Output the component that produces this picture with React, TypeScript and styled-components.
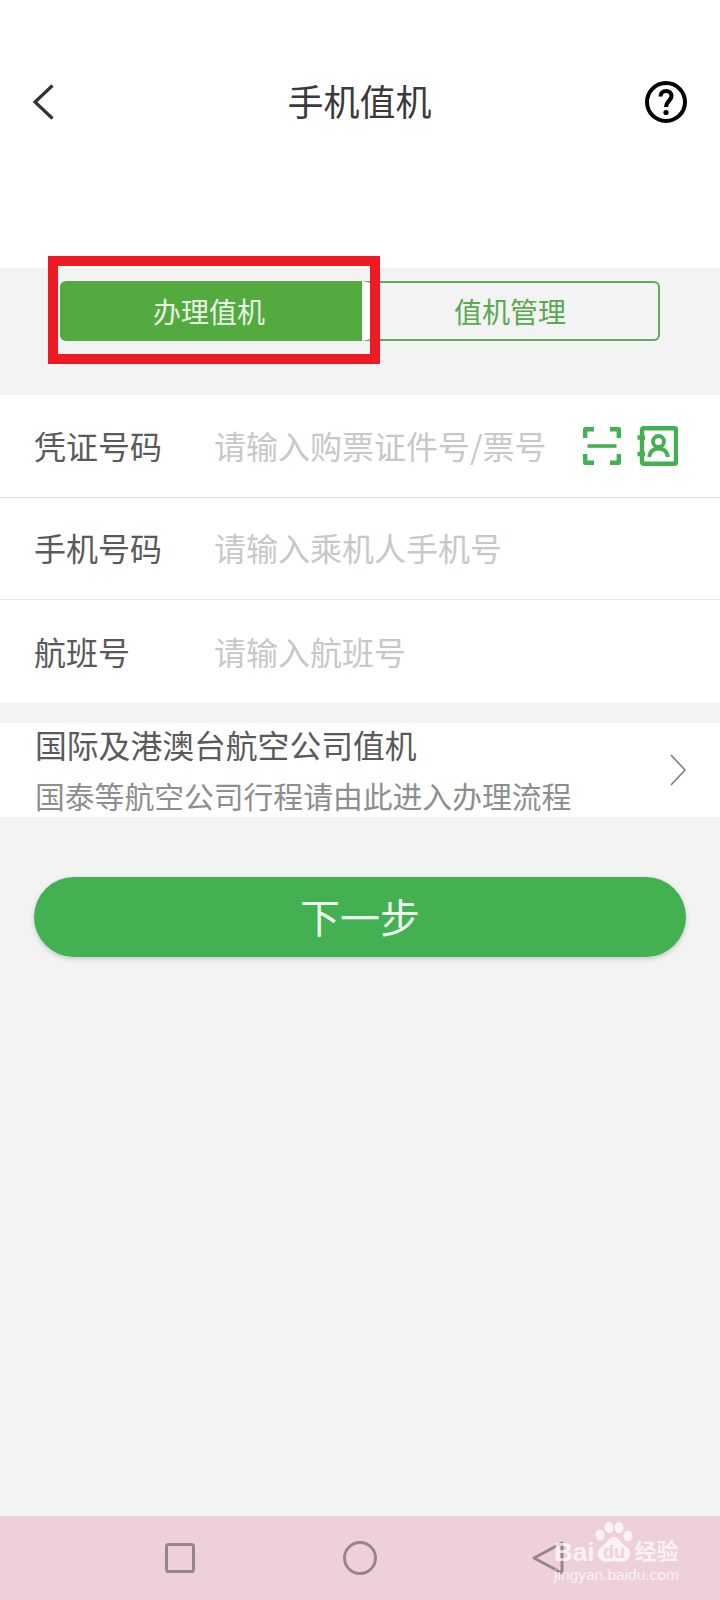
import React, { FC } from 'react';
import styled, { createGlobalStyle } from 'styled-components';

const GlobalStyle = createGlobalStyle`
  html, body {
    margin: 0;
    padding: 0;
    background: #f3f3f3;
  }
  * {
    box-sizing: border-box;
  }
`;

const GREEN = '#43b051';
const CJK = `"Noto Sans CJK SC", "Noto Sans", sans-serif`;

const Page = styled.div`
  display: flex;
  flex-direction: column;
  width: 720px;
  height: 1600px;
  overflow: hidden;
  background: #f3f3f3;
  font-family: ${CJK};
`;

const Header = styled.header`
  display: flex;
  align-items: center;
  justify-content: space-between;
  height: 268px;
  padding: 0 33px 64px 32px;
  background: #fff;
`;

const HeaderSlot = styled.div<{ $right?: boolean }>`
  display: flex;
  justify-content: ${(p) => (p.$right ? 'flex-end' : 'flex-start')};
  width: 42px;
`;

const Title = styled.h1`
  margin: 0 0 4px;
  font-size: 36px;
  line-height: 48px;
  font-weight: 400;
  color: #3a3a3a;
`;

const TabBar = styled.div`
  position: relative;
  display: flex;
  height: 127px;
  padding: 13px 60px 0 60px;
`;

const Tab = styled.div<{ $active?: boolean }>`
  display: flex;
  align-items: center;
  justify-content: center;
  height: 60px;
  font-size: 28px;
  ${(p) =>
    p.$active
      ? `
    width: 302px;
    padding-right: 4px;
    background: #53aa3e;
    color: #e9f5e4;
    border-radius: 6px 0 0 6px;
  `
      : `
    flex: 1;
    padding-right: 8px;
    color: #59a94f;
    border: 2px solid #62a95c;
    border-left: 8px solid #fff;
    border-radius: 0 6px 6px 0;
  `}
`;

const Highlight = styled.div`
  position: absolute;
  top: -12px;
  left: 48px;
  width: 332px;
  height: 108px;
  border: 10px solid #ed1c24;
`;

const Form = styled.section`
  display: grid;
  grid-auto-rows: 1fr;
  height: 308px;
  background: #fff;
`;

const Row = styled.div`
  display: flex;
  align-items: center;
  padding: 0 42px 0 34px;
  border-bottom: 1px solid #e4e4e4;
  &:last-child {
    border-bottom: none;
  }
`;

const Label = styled.span`
  width: 180px;
  margin-bottom: 2px;
  font-size: 32px;
  color: #5a5a5a;
`;

const Placeholder = styled.span`
  flex: 1;
  margin-bottom: 2px;
  font-size: 32px;
  color: #c8c8c8;
  white-space: nowrap;
`;

const IconGroup = styled.div`
  display: flex;
  align-items: center;
  gap: 16px;
`;

const IntlRow = styled.div`
  position: relative;
  display: flex;
  align-items: flex-start;
  justify-content: space-between;
  height: 94px;
  margin-top: 20px;
  padding: 3px 34px 0 35px;
  background: #fff;
`;

const IntlText = styled.div`
  display: flex;
  flex-direction: column;
  gap: 15px;
`;

const IntlTitle = styled.div`
  font-size: 31.8px;
  line-height: 36px;
  color: #5a5a5a;
`;

const IntlSub = styled.div`
  font-size: 29.8px;
  line-height: 36px;
  color: #8e8e8e;
`;

const Chevron = styled.svg`
  margin-top: 28px;
`;

const NextButton = styled.button`
  display: flex;
  align-items: center;
  justify-content: center;
  height: 80px;
  margin: 60px 34px 0;
  padding: 0 0 2px;
  border: none;
  border-radius: 40px;
  background: ${GREEN};
  box-shadow: 0 2px 5px rgba(0, 0, 0, 0.18);
  color: #eef8ef;
  font-family: ${CJK};
  font-size: 40px;
`;

const NavBar = styled.nav`
  position: relative;
  display: flex;
  align-items: center;
  height: 84px;
  margin-top: auto;
  padding: 0 0 1px 165px;
  background: #eed1d8;
`;

const NavIcon = styled.svg<{ $gap?: number }>`
  margin-left: ${(p) => p.$gap ?? 0}px;
`;

const Watermark = styled.div`
  position: absolute;
  left: 554px;
  top: 6px;
  width: 128px;
  color: rgba(255, 255, 255, 0.72);
`;

const MarkTop = styled.div`
  display: flex;
  align-items: flex-end;
  height: 41px;
`;

const MarkBai = styled.span`
  font-family: "Liberation Sans", sans-serif;
  font-weight: 700;
  font-size: 26px;
  line-height: 22px;
`;

const MarkCn = styled.span`
  font-size: 22px;
  font-weight: 700;
  line-height: 28px;
`;

const MarkUrl = styled.div`
  margin-top: 3px;
  font-family: "Liberation Sans", sans-serif;
  font-size: 15.5px;
  line-height: 18px;
  white-space: nowrap;
`;

const ScanIcon: FC = () => (
  <svg width="38" height="38" viewBox="0 0 38 38" fill="none" stroke={GREEN} strokeWidth="4.400" strokeLinejoin="round">
    <path d="M2.200 11V2.200H11" />
    <path d="M27 2.200H35.800V11" />
    <path d="M35.800 27V35.800H27" />
    <path d="M11 35.800H2.200V27" />
    <path d="M4.500 19H33.500" strokeWidth="3.600" />
  </svg>
);

const ContactIcon: FC = () => (
  <svg width="41" height="40" viewBox="0 0 41 40" fill="none" stroke={GREEN} strokeWidth="4.400">
    <rect x="5" y="2.200" width="34" height="35.600" rx="1.500" />
    <path d="M0.500 11.500H8M0.500 28H8" strokeWidth="4.600" />
    <circle cx="21.500" cy="15.500" r="5.500" strokeWidth="3.800" />
    <path d="M12 31C13 25.500 16 22.500 21.500 22.500C27 22.500 30 25.500 31 31" strokeWidth="3.800" />
  </svg>
);

const Paw: FC = () => (
  <svg width="40" height="41" viewBox="0 0 40 41" fill="rgba(255,255,255,0.72)">
    <ellipse cx="6" cy="13" rx="4.500" ry="5.500" />
    <ellipse cx="15" cy="5.500" rx="4.500" ry="5.500" />
    <ellipse cx="25" cy="5.500" rx="4.500" ry="5.500" />
    <ellipse cx="34" cy="14" rx="4.500" ry="5.500" />
    <path d="M20 15C25 15 26 20 30 23C35 26 38 30 35 36C32 41 26 40 20 39C14 40 8 41 5 36C2 31 5 26 10 23C14 20 15 15 20 15Z" />
    <text x="20" y="36" textAnchor="middle" fontFamily="Liberation Sans" fontWeight="700" fontSize="18" fill="#eed1d8">
      du
    </text>
  </svg>
);

const rows = [
  { label: '凭证号码', hint: '请输入购票证件号/票号', icons: true },
  { label: '手机号码', hint: '请输入乘机人手机号', icons: false },
  { label: '航班号', hint: '请输入航班号', icons: false },
];

const App: FC = () => (
  <Page>
    <GlobalStyle />
    <Header>
      <HeaderSlot>
        <svg width="22" height="36" viewBox="0 0 22 36" fill="none" stroke="#333" strokeWidth="3.200">
          <path d="M20.500 1.500L3 18L20.500 34.500" />
        </svg>
      </HeaderSlot>
      <Title>手机值机</Title>
      <HeaderSlot $right>
        <svg width="42" height="42" viewBox="0 0 42 42" fill="none" stroke="#000">
          <circle cx="21" cy="21" r="19" strokeWidth="4" />
          <path
            d="M15.500 15.500C15.500 12 18 10 21 10C24 10 26.500 12 26.500 15C26.500 19.500 21 20.500 21 26"
            strokeWidth="4.200"
          />
          <circle cx="21" cy="31.500" r="2.600" fill="#000" stroke="none" />
        </svg>
      </HeaderSlot>
    </Header>

    <TabBar>
      <Tab $active>办理值机</Tab>
      <Tab>值机管理</Tab>
      <Highlight />
    </TabBar>

    <Form>
      {rows.map((row) => (
        <Row key={row.label}>
          <Label>{row.label}</Label>
          <Placeholder>{row.hint}</Placeholder>
          {row.icons && (
            <IconGroup>
              <ScanIcon />
              <ContactIcon />
            </IconGroup>
          )}
        </Row>
      ))}
    </Form>

    <IntlRow>
      <IntlText>
        <IntlTitle>国际及港澳台航空公司值机</IntlTitle>
        <IntlSub>国泰等航空公司行程请由此进入办理流程</IntlSub>
      </IntlText>
      <Chevron width="16" height="32" viewBox="0 0 16 32" fill="none" stroke="#777" strokeWidth="1.500">
        <path d="M1 1L15 16L1 31" />
      </Chevron>
    </IntlRow>

    <NextButton>下一步</NextButton>

    <NavBar>
      <NavIcon width="30" height="30" viewBox="0 0 30 30" fill="none" stroke="#968688" strokeWidth="3">
        <rect x="1.500" y="1.500" width="27" height="27" rx="2" />
      </NavIcon>
      <NavIcon $gap={148} width="34" height="34" viewBox="0 0 34 34" fill="none" stroke="#968688" strokeWidth="3">
        <circle cx="17" cy="17" r="15.500" />
      </NavIcon>
      <NavIcon $gap={155} width="32" height="34" viewBox="0 0 32 34" fill="none" stroke="#968688" strokeWidth="3">
        <path d="M30 2L2 17L30 32Z" strokeLinejoin="round" />
      </NavIcon>
      <Watermark>
        <MarkTop>
          <MarkBai>Bai</MarkBai>
          <Paw />
          <MarkCn>经验</MarkCn>
        </MarkTop>
        <MarkUrl>jingyan.baidu.com</MarkUrl>
      </Watermark>
    </NavBar>
  </Page>
);

export default App;
